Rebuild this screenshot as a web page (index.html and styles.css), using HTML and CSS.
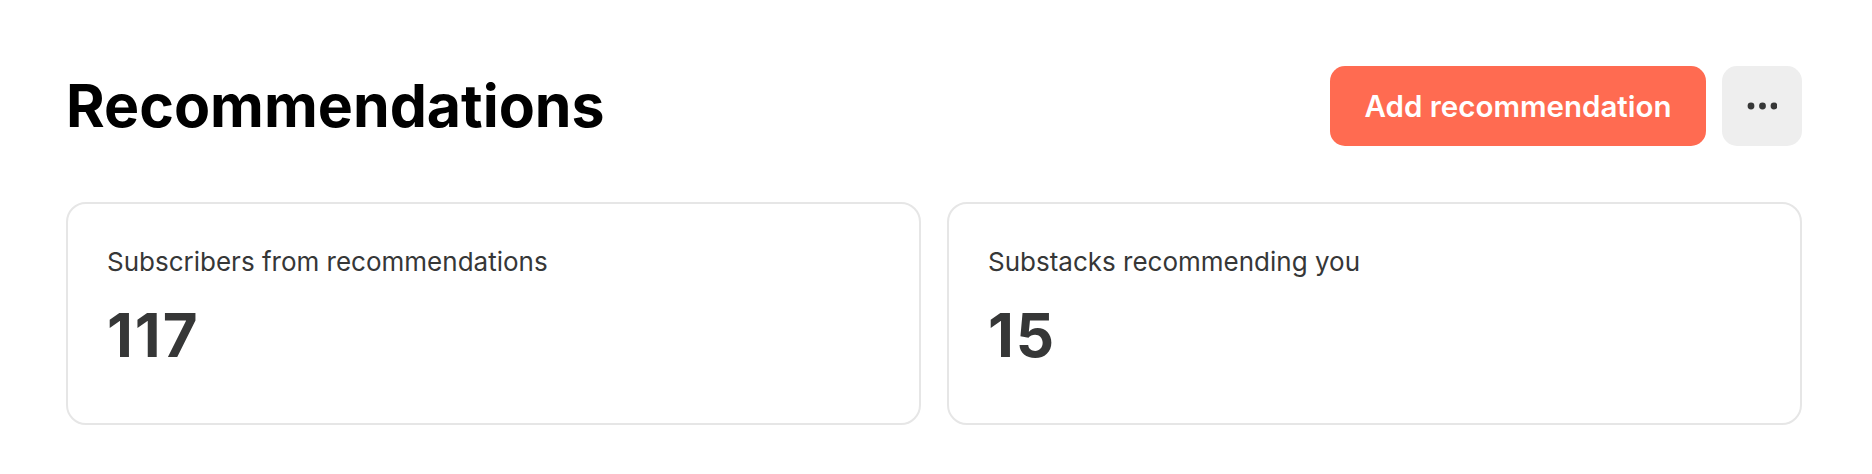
FILE: index.html
```html
<!DOCTYPE html>
<html lang="en">
<head>
<meta charset="utf-8">
<title>Recommendations</title>
<link rel="stylesheet" href="styles.css">
</head>
<body>
<main class="page">
  <header class="header">
    <h1 class="title">Recommendations</h1>
    <div class="actions">
      <button class="btn-primary" type="button">Add recommendation</button>
      <button class="btn-more" type="button" aria-label="More">
        <svg width="30" height="8" viewBox="0 0 30 8" aria-hidden="true">
          <circle cx="4" cy="4" r="3.4" fill="#363737"/>
          <circle cx="15.5" cy="4" r="3.4" fill="#363737"/>
          <circle cx="27" cy="4" r="3.4" fill="#363737"/>
        </svg>
      </button>
    </div>
  </header>
  <section class="stats">
    <div class="card">
      <div class="card-label">Subscribers from recommendations</div>
      <div class="card-value">117</div>
    </div>
    <div class="card">
      <div class="card-label">Substacks recommending you</div>
      <div class="card-value">15</div>
    </div>
  </section>
</main>
</body>
</html>
```
FILE: styles.css
```css
* { box-sizing: border-box; }
html, body { margin: 0; padding: 0; background: #ffffff; }
body { font-family: Inter, "Noto Sans", "Liberation Sans", sans-serif; color: #363737; }

.page {
  padding: 66px 70px 0 66px;
}

.header {
  display: flex;
  align-items: center;
  justify-content: space-between;
  height: 80px;
}

.title {
  margin: 0;
  font-size: 59px;
  font-weight: 700;
  line-height: 80px;
  color: #000000;
  letter-spacing: 0;
}

.actions {
  display: flex;
  gap: 16px;
}

.btn-primary {
  width: 376px;
  height: 80px;
  border: none;
  border-radius: 15px;
  background: #ff6b51;
  color: #ffffff;
  font-family: inherit;
  font-size: 29.5px;
  font-weight: 600;
  padding: 0;
}

.btn-more {
  width: 80px;
  height: 80px;
  border: none;
  border-radius: 15px;
  background: #eeeeee;
  display: flex;
  align-items: center;
  justify-content: center;
  padding: 0;
}

.stats {
  display: grid;
  grid-template-columns: 1fr 1fr;
  gap: 26px;
  margin-top: 56px;
}

.card {
  border: 2px solid #e6e6e6;
  border-radius: 20px;
  padding: 43px 38px 58px 39px;
}

.card-label {
  font-size: 26px;
  line-height: 30px;
  color: #363737;
}

.card-value {
  margin-top: 28px;
  font-size: 60px;
  line-height: 60px;
  font-weight: 700;
  letter-spacing: 2px;
  color: #363737;
}
```
